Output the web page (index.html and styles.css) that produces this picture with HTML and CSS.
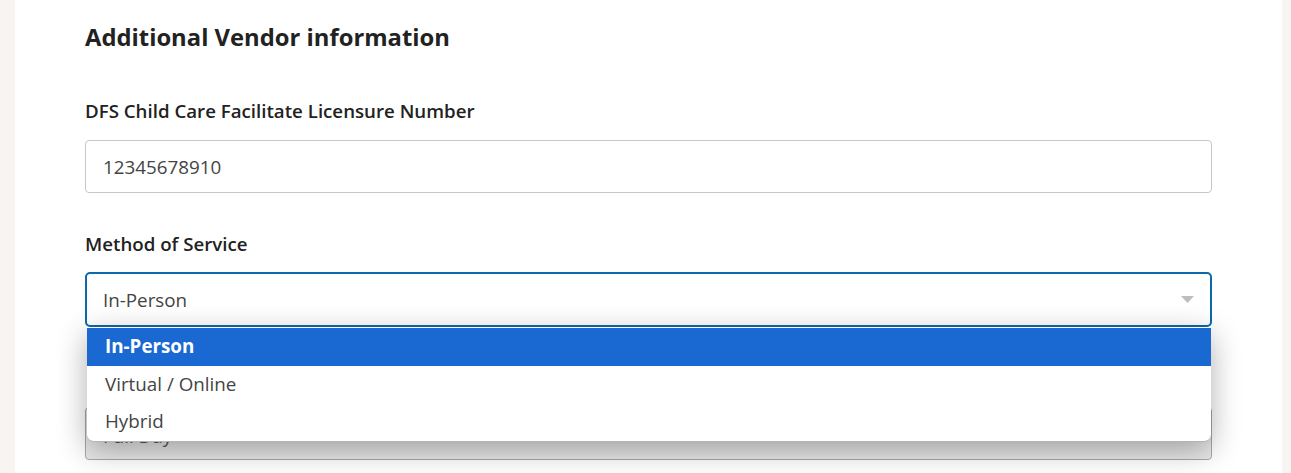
FILE: index.html
```html
<!DOCTYPE html>
<html lang="en">
<head>
<meta charset="utf-8">
<title>Additional Vendor information</title>
<link rel="stylesheet" href="styles.css">
</head>
<body>
<main class="card">
  <h2 class="title">Additional Vendor information</h2>
  <div class="field first">
    <label class="label">DFS Child Care Facilitate Licensure Number</label>
    <div class="input">12345678910</div>
  </div>
  <div class="field second">
    <label class="label">Method of Service</label>
    <div class="select-wrap">
      <div class="select">
        <span>In-Person</span>
        <svg class="caret" width="13" height="7" viewBox="0 0 13 7"><path d="M0 0h13L6.5 7z" fill="#bdbdbd"/></svg>
      </div>
      <ul class="menu">
        <li class="opt active">In-Person</li>
        <li class="opt">Virtual / Online</li>
        <li class="opt">Hybrid</li>
      </ul>
    </div>
  </div>
  <div class="field last">
    <div class="input disabled">Full Day</div>
  </div>
</main>
</body>
</html>
```
FILE: styles.css
```css
html, body { margin: 0; padding: 0; overflow: hidden; }
body {
  background: #f8f4f1;
  font-family: "Open Sans", "Noto Sans", sans-serif;
  color: #222;
  height: 473px;
}
.card {
  background: #fff;
  margin: 0 9px 0 15px;
  padding: 21px 70px 0 70px;
  height: 473px;
  box-sizing: border-box;
  overflow: hidden;
}
.title {
  margin: 0;
  font-size: 23.8px;
  font-weight: 700;
  line-height: 32px;
  color: #222;
}
.field.first { margin-top: 46px; }
.field.second { margin-top: 39px; }
.label {
  display: block;
  font-size: 18.7px;
  font-weight: 600;
  line-height: 24px;
  color: #222;
  margin-bottom: 16px;
}
.first .label { margin-bottom: 17px; }
.input {
  height: 53px;
  box-sizing: border-box;
  border: 1px solid #c7c7c7;
  border-radius: 4px;
  padding: 0 17px;
  display: flex;
  align-items: center;
  font-size: 18.8px;
  color: #444;
}
.select-wrap { position: relative; }
.select {
  height: 55px;
  box-sizing: border-box;
  border: 2px solid #0b6aa9;
  border-radius: 5px;
  padding: 0 14px 0 16px;
  display: flex;
  align-items: center;
  justify-content: space-between;
  font-size: 18.8px;
  color: #444;
}
.caret { margin-right: 2px; }
.menu {
  position: absolute;
  left: 2px;
  right: 1px;
  top: 55px;
  margin: 0;
  padding: 1px 0 0;
  list-style: none;
  background: #fff;
  border-radius: 0 0 7px 7px;
  border-bottom: 1px solid #b4b4b4;
  box-shadow: 0 8px 30px rgba(0,0,0,0.32);
  overflow: hidden;
  z-index: 2;
}
.opt {
  height: 37.5px;
  line-height: 37px;
  padding: 0 18px;
  font-size: 18.8px;
  color: #444;
}
.opt.active {
  background: #1a69d2;
  color: #fff;
  font-weight: 700;
}
.field.last { margin-top: 80px; }
.input.disabled {
  align-items: flex-end;
  padding-bottom: 10px;
  background: #e9e9e9;
  border-color: #a8a8a8;
  color: #555;
}
```
